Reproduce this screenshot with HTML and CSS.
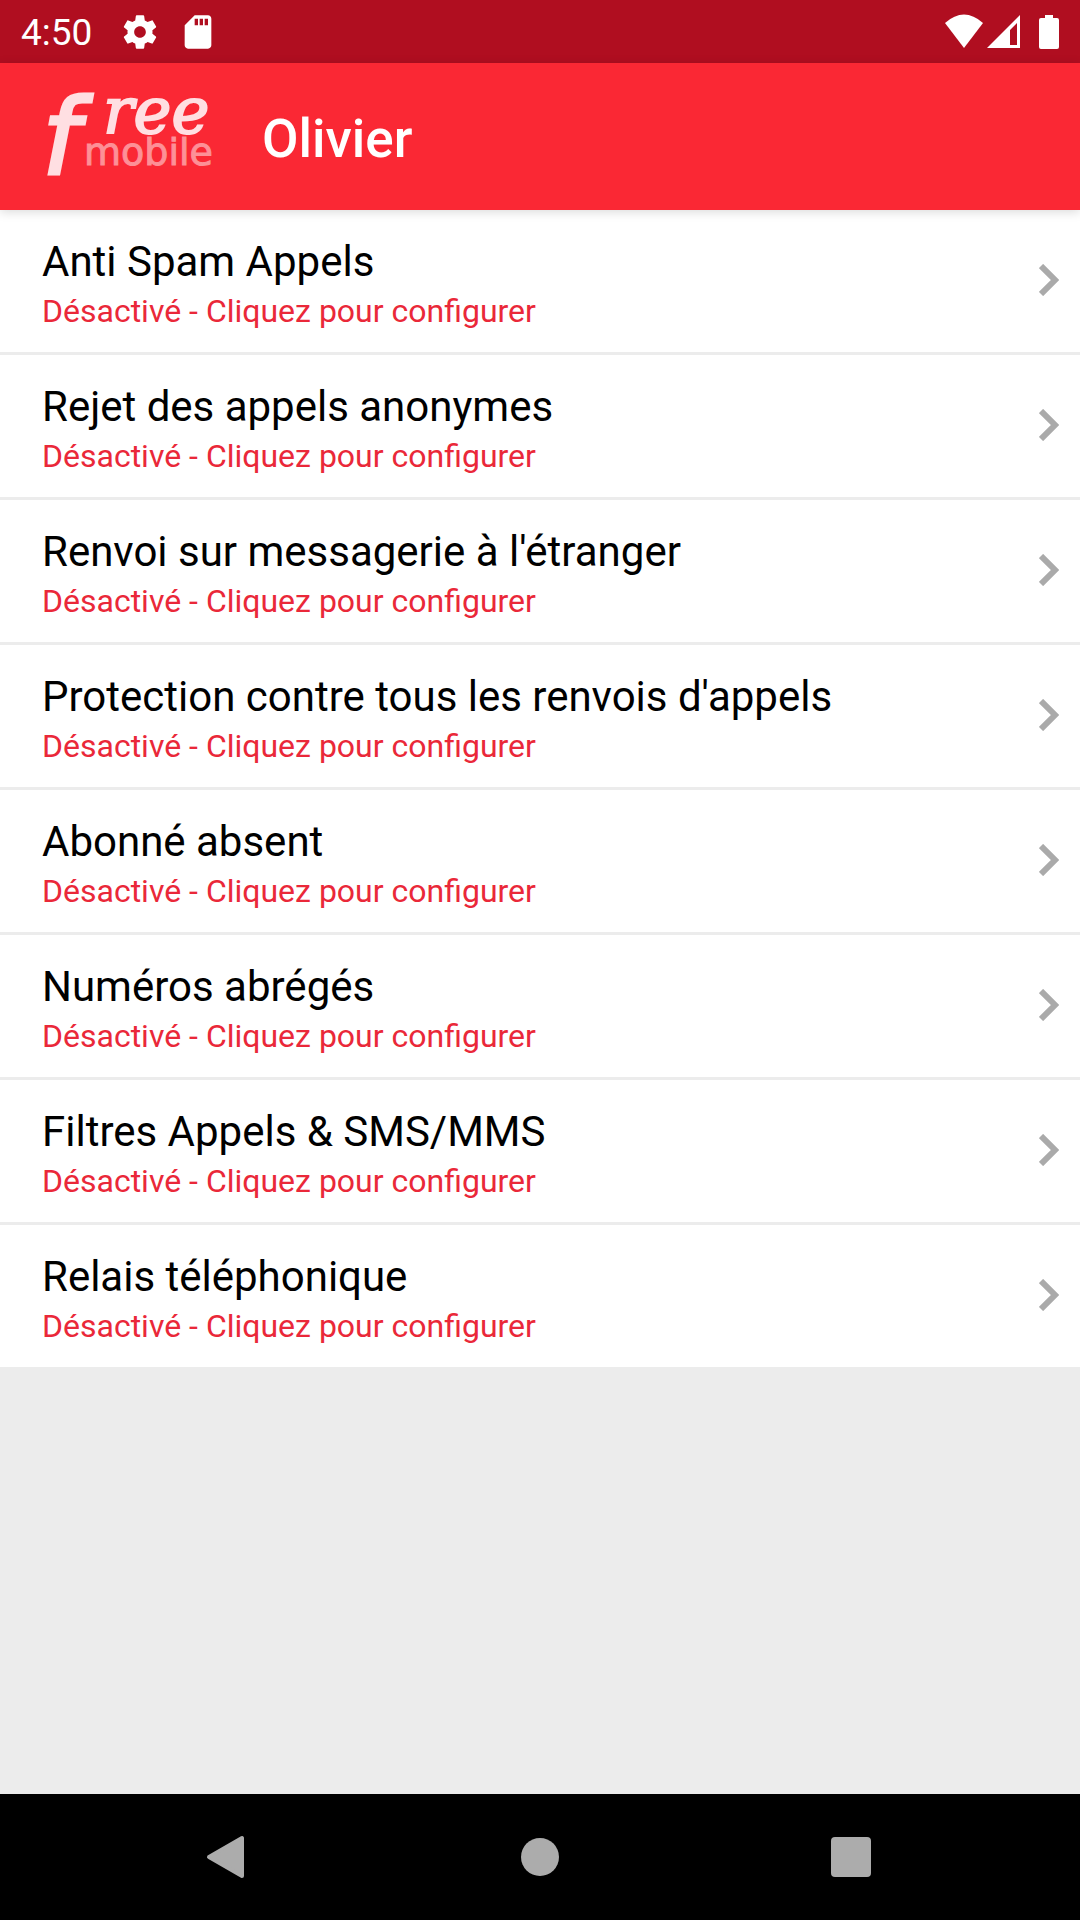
FILE: index.html
```html
<!DOCTYPE html>
<html lang="fr">
<head>
  <meta charset="UTF-8" />
  <meta name="viewport" content="width=device-width, initial-scale=1.0"/>
  <title>Free Mobile</title>
  <link rel="stylesheet" href="styles.css">
</head>
<body>

  <!-- Status bar -->
  <div class="status-bar">
    <span class="clock">4:50</span>
    <svg class="settings-icon" viewBox="0 0 24 24" aria-hidden="true"><path d="M19.43 12.98c.04-.32.07-.64.07-.98s-.03-.66-.07-.98l2.11-1.65c.19-.15.24-.42.12-.64l-2-3.46c-.12-.22-.39-.3-.61-.22l-2.49 1c-.52-.4-1.08-.73-1.69-.98l-.38-2.65C14.46 2.18 14.25 2 14 2h-4c-.25 0-.46.18-.49.42l-.38 2.65c-.61.25-1.17.59-1.69.98l-2.49-1c-.23-.09-.49 0-.61.22l-2 3.46c-.13.22-.07.49.12.64l2.11 1.65c-.04.32-.07.65-.07.98s.03.66.07.98l-2.11 1.65c-.19.15-.24.42-.12.64l2 3.46c.12.22.39.3.61.22l2.49-1c.52.4 1.08.73 1.69.98l.38 2.65c.03.24.24.42.49.42h4c.25 0 .46-.18.49-.42l.38-2.65c.61-.25 1.17-.59 1.69-.98l2.49 1c.23.09.49 0 .61-.22l2-3.46c.12-.22.07-.49-.12-.64l-2.11-1.65zM12 15.5c-1.93 0-3.5-1.57-3.5-3.5s1.57-3.5 3.5-3.5 3.5 1.57 3.5 3.5-1.57 3.5-3.5 3.5z"/></svg>
    <svg class="card-icon" viewBox="0 0 24 24" aria-hidden="true"><path d="M18 2h-8L4.02 8 4 20c0 1.1.9 2 2 2h12c1.1 0 2-.9 2-2V4c0-1.1-.9-2-2-2zm-6 6h-2V4h2v4zm3 0h-2V4h2v4zm3 0h-2V4h2v4z"/></svg>
    <svg class="signal-icons" viewBox="0 0 116 36" aria-hidden="true">
      <path d="M1 9Q20-8 39 9L20 34z"/>
      <path fill-rule="evenodd" d="M76 1v33H43zM73 9L66 16v15h7z"/>
      <path d="M101 1h8v3h4a2 2 0 0 1 2 2v27a2 2 0 0 1-2 2H97a2 2 0 0 1-2-2V6a2 2 0 0 1 2-2h4z"/>
    </svg>
  </div>

  <header class="header">
    <svg class="logo" viewBox="0 0 200 90" role="img" aria-label="free mobile">
      <text class="logo-f" x="12" y="83">f</text>
      <text class="logo-ree" x="73" y="42">ree</text>
      <text class="logo-mobile" x="54" y="74">mobile</text>
    </svg>
    <h1>Olivier</h1>
  </header>

  <main class="content">
    <ul class="options">
      <li><a class="option" href="#">
        <span class="label">Anti Spam Appels</span>
        <span class="state">Désactivé - Cliquez pour configurer</span>
        <svg class="chevron" viewBox="0 0 20 32" aria-hidden="true"><path d="M2 2l14 14L2 30"/></svg>
      </a></li>
      <li><a class="option" href="#">
        <span class="label">Rejet des appels anonymes</span>
        <span class="state">Désactivé - Cliquez pour configurer</span>
        <svg class="chevron" viewBox="0 0 20 32" aria-hidden="true"><path d="M2 2l14 14L2 30"/></svg>
      </a></li>
      <li><a class="option" href="#">
        <span class="label">Renvoi sur messagerie à l'étranger</span>
        <span class="state">Désactivé - Cliquez pour configurer</span>
        <svg class="chevron" viewBox="0 0 20 32" aria-hidden="true"><path d="M2 2l14 14L2 30"/></svg>
      </a></li>
      <li><a class="option" href="#">
        <span class="label">Protection contre tous les renvois d'appels</span>
        <span class="state">Désactivé - Cliquez pour configurer</span>
        <svg class="chevron" viewBox="0 0 20 32" aria-hidden="true"><path d="M2 2l14 14L2 30"/></svg>
      </a></li>
      <li><a class="option" href="#">
        <span class="label">Abonné absent</span>
        <span class="state">Désactivé - Cliquez pour configurer</span>
        <svg class="chevron" viewBox="0 0 20 32" aria-hidden="true"><path d="M2 2l14 14L2 30"/></svg>
      </a></li>
      <li><a class="option" href="#">
        <span class="label">Numéros abrégés</span>
        <span class="state">Désactivé - Cliquez pour configurer</span>
        <svg class="chevron" viewBox="0 0 20 32" aria-hidden="true"><path d="M2 2l14 14L2 30"/></svg>
      </a></li>
      <li><a class="option" href="#">
        <span class="label">Filtres Appels &amp; SMS/MMS</span>
        <span class="state">Désactivé - Cliquez pour configurer</span>
        <svg class="chevron" viewBox="0 0 20 32" aria-hidden="true"><path d="M2 2l14 14L2 30"/></svg>
      </a></li>
      <li><a class="option" href="#">
        <span class="label">Relais téléphonique</span>
        <span class="state">Désactivé - Cliquez pour configurer</span>
        <svg class="chevron" viewBox="0 0 20 32" aria-hidden="true"><path d="M2 2l14 14L2 30"/></svg>
      </a></li>
    </ul>
  </main>

  <!-- System navigation -->
  <nav class="nav-bar">
    <button type="button" aria-label="Retour"><svg viewBox="0 0 48 48"><path d="M37 5v38L4 24z" stroke="#acacac" stroke-width="4" stroke-linejoin="round"/></svg></button>
    <button type="button" aria-label="Accueil"><svg viewBox="0 0 48 48"><circle cx="24" cy="24" r="19"/></svg></button>
    <button type="button" aria-label="Applications récentes"><svg viewBox="0 0 48 48"><rect x="4" y="4" width="40" height="40" rx="4"/></svg></button>
  </nav>

</body>
</html>
```
FILE: styles.css
```css
* {
  box-sizing: border-box;
}

body {
  font-family: Roboto, sans-serif;
  background: #ececec;
  color: #000;
  margin: 0;
  min-height: 100vh;
  display: flex;
  flex-direction: column;
}

.status-bar {
  display: flex;
  align-items: center;
  height: 63px;
  padding: 0 20px 0 21px;
  background: #b00e20;
  color: #fff;
}

.status-bar svg {
  fill: #fff;
}

.clock {
  font-size: 37px;
  line-height: 44px;
  padding-top: 2px;
}

.settings-icon,
.card-icon {
  width: 40px;
  height: 40px;
}

.settings-icon {
  margin-left: 28px;
}

.card-icon {
  margin-left: 18px;
}

.signal-icons {
  width: 116px;
  height: 36px;
  margin-left: auto;
}

.header {
  display: flex;
  align-items: center;
  gap: 32px;
  padding: 28px 30px 29px;
  background: #fa2834;
  color: #fff;
  box-shadow: 0 2px 10px rgba(0, 0, 0, 0.15);
  z-index: 1;
}

.logo {
  width: 200px;
  height: 90px;
  overflow: visible;
}

.logo text {
  fill: #ffdfe2;
  stroke: #ffdfe2;
}

.logo .logo-f {
  font: italic 106px "DejaVu Sans", sans-serif;
  stroke-width: 3px;
}

.logo .logo-ree {
  font: italic 64px "DejaVu Serif", serif;
  stroke-width: 2px;
}

.logo .logo-mobile {
  font: 38px "DejaVu Sans", sans-serif;
  fill: #fd9097;
  stroke: #fd9097;
  stroke-width: 1px;
}

h1 {
  margin: 0;
  padding-top: 6px;
  font-size: 53px;
  line-height: 60px;
  font-weight: 500;
}

.content {
  flex: 1;
}

.options {
  list-style: none;
  margin: 0;
  padding: 0;
}

.options li + li {
  border-top: 3px solid #ececec;
}

.option {
  display: grid;
  grid-template-columns: 1fr 20px;
  row-gap: 5px;
  padding: 27px 21px 22px 42px;
  background: #fff;
  color: #000;
  text-decoration: none;
}

.label {
  font-size: 42px;
  line-height: 50px;
}

.state {
  grid-row: 2;
  font-size: 32px;
  line-height: 38px;
  color: #ea2839;
}

.chevron {
  grid-column: 2;
  grid-row: 1 / 3;
  width: 20px;
  height: 32px;
  margin-top: 27px;
  fill: none;
  stroke: #aaa;
  stroke-width: 6;
}

.nav-bar {
  display: flex;
  justify-content: space-between;
  padding: 0 19%;
  background: #000;
}

.nav-bar button {
  display: flex;
  padding: 39px 0;
  border: 0;
  background: none;
}

.nav-bar svg {
  width: 48px;
  height: 48px;
  fill: #acacac;
}
```
